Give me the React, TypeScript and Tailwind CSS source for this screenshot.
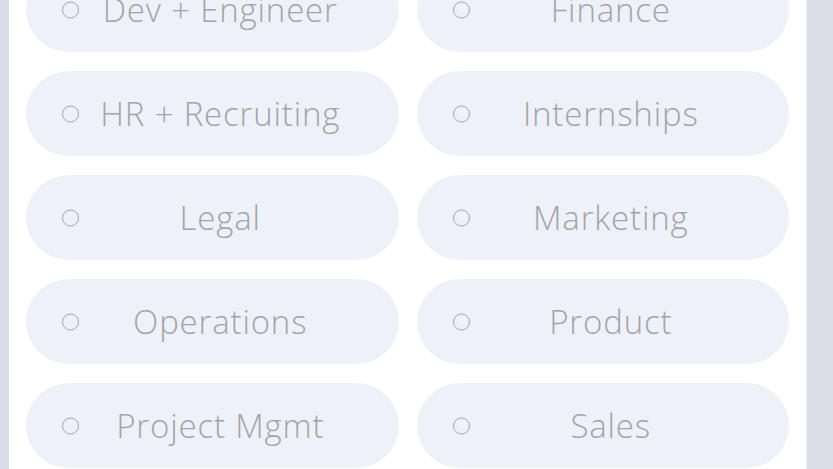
import React from "react";

const items = [
  "Dev + Engineer",
  "Finance",
  "HR + Recruiting",
  "Internships",
  "Legal",
  "Marketing",
  "Operations",
  "Product",
  "Project Mgmt",
  "Sales",
];

export default function App() {
  return (
    <div className="w-[833px] h-[469px] overflow-hidden bg-[#dfe1ec] flex">
      <div className="w-[9px] shrink-0 bg-[#d9dbe7]" />
      <div className="w-[798px] shrink-0 bg-white border-r border-[#eceef4] mt-[-33px] pl-[17px] pr-[17px]">
        <div className="grid grid-cols-2 gap-x-[18px] gap-y-[19px]">
          {items.map((t) => (
            <div
              key={t}
              className="relative h-[85px] rounded-full bg-[#eff1f9] flex items-center justify-center pl-[16px]"
            >
              <span className="absolute left-[36px] top-1/2 -translate-y-1/2 w-[17px] h-[17px] rounded-full border-[1.5px] border-[#a3a5ad]" />
              <span
                className="text-[33px] font-light text-[#a2a4ac] tracking-[0.025em] leading-none"
                style={{ fontFamily: '"Open Sans", sans-serif' }}
              >
                {t}
              </span>
            </div>
          ))}
        </div>
      </div>
      <div className="flex-1 bg-[#dcdee9]" />
    </div>
  );
}
